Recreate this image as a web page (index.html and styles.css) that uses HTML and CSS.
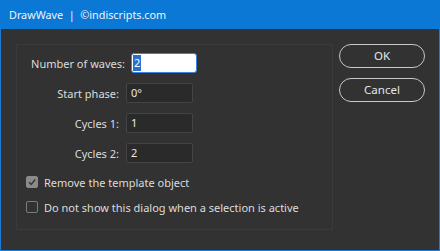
FILE: index.html
```html
<!DOCTYPE html>
<html>
<head>
<meta charset="utf-8">
<link rel="stylesheet" href="styles.css">
</head>
<body>
<div class="window">
  <div class="titlebar">DrawWave&nbsp; | &nbsp;©indiscripts.com</div>
  <div class="content">
    <div class="panel">
      <div class="field first">
        <span class="label">Number of waves:</span>
        <span class="input active"><span class="sel">2</span></span>
      </div>
      <div class="field">
        <span class="label">Start phase:</span>
        <span class="input">0°</span>
      </div>
      <div class="field">
        <span class="label">Cycles 1:</span>
        <span class="input">1</span>
      </div>
      <div class="field">
        <span class="label">Cycles 2:</span>
        <span class="input">2</span>
      </div>
      <div class="check checked-row">
        <span class="box checked"><svg width="10" height="10" viewBox="0 0 10 10"><path d="M2 5.2 L4.2 7.4 L8.2 2.6" fill="none" stroke="#3a3a3a" stroke-width="1.6"/></svg></span>
        <span class="ctext">Remove the template object</span>
      </div>
      <div class="check">
        <span class="box"></span>
        <span class="ctext">Do not show this dialog when a selection is active</span>
      </div>
    </div>
    <div class="buttons">
      <div class="btn">OK</div>
      <div class="btn">Cancel</div>
    </div>
  </div>
</div>
</body>
</html>
```
FILE: styles.css
```css
* { box-sizing: border-box; }
html, body { margin: 0; padding: 0; background: #323232; }
body { font-family: "Noto Sans", "Open Sans", sans-serif; font-size: 11px; color: #dcdcdc; }
.window {
  width: 440px; height: 251px;
  border: 1px solid #1a7ad4; border-top: none;
  background: #323232;
  display: flex; flex-direction: column;
}
.titlebar {
  height: 29px; margin: 0 -1px; background: #0a78d4; color: #eef5fc;
  padding-left: 9px; line-height: 29px; font-size: 10.8px;
}
.content { display: flex; padding: 15px 0 0 15px; gap: 6px; }
.panel {
  width: 317px; height: 186px; border: 1px solid #3a3a3a;
  padding-top: 8px;
}
.field { display: flex; align-items: center; height: 20px; margin-bottom: 10px; }
.label { width: 102px; text-align: right; margin-right: 7px; white-space: nowrap; }
.field.first .label { width: 108px; margin-right: 6px; }
.input {
  width: 67px; height: 20px; background: #2a2a2a; border: 1px solid #444;
  border-radius: 2px; padding-left: 4px; line-height: 18px; color: #e8e8e8;
  display: flex; align-items: center;
}
.field.first .input { width: 66px; background: #fff; border-color: #3c82d8; color: #fff; padding-left: 1px; border-radius: 3px; }
.sel { background: #2a6fd0; display: inline-block; height: 16px; line-height: 16px; padding: 0 1px; width: 8px; }
.check { display: flex; align-items: center; margin-left: 9px; height: 14px; }
.checked-row { margin-top: 12px; margin-bottom: 11px; }
.box {
  width: 12px; height: 12px; border: 1px solid #7c7c7c; border-radius: 2px;
  margin-right: 6px; display: flex; align-items: center; justify-content: center;
}
.box.checked { background: #8a8a8a; border-color: #8a8a8a; }
.ctext { white-space: nowrap; }
.buttons { display: flex; flex-direction: column; gap: 10px; margin-top: 0; }
.btn {
  width: 86px; height: 24px; border: 1.5px solid #c8c8c8; border-radius: 12px;
  text-align: center; line-height: 21px; color: #e6e6e6; font-size: 11.5px;
}
```
